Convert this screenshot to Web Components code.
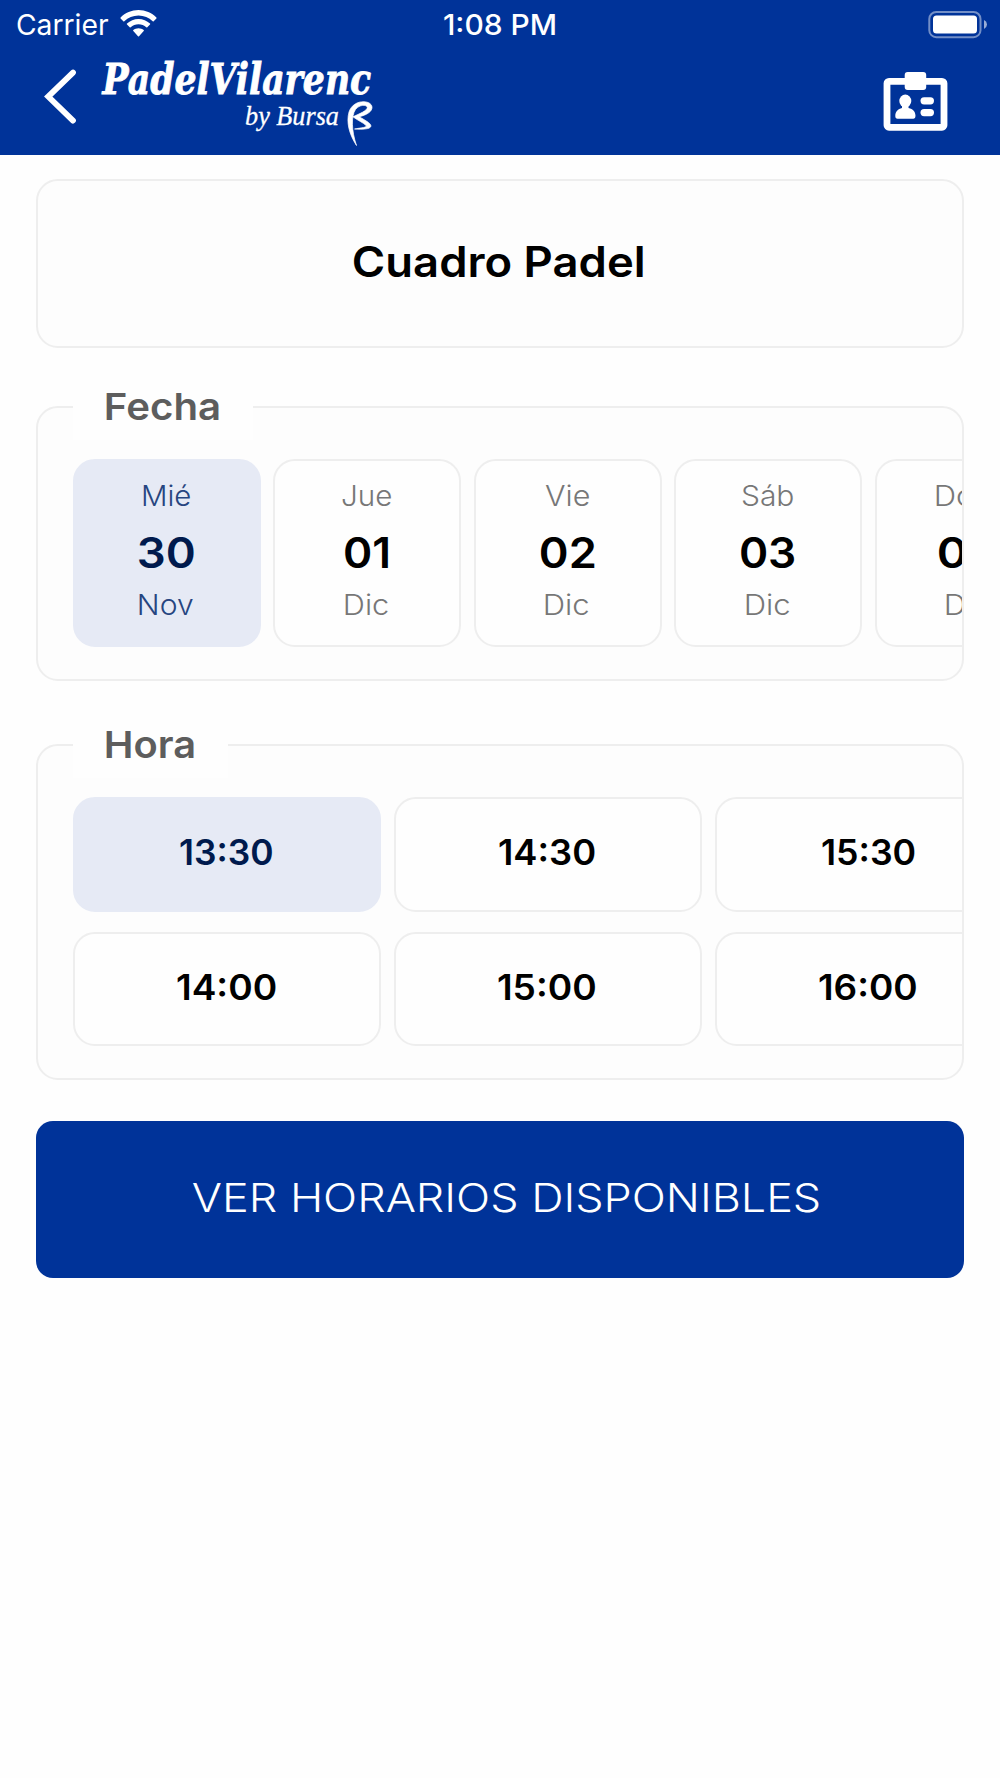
<!DOCTYPE html>
<html lang="es">
<head>
<meta charset="utf-8">
<title>Cuadro Padel</title>
<style>
body { margin: 0; background: #fefefe; font-family: Inter, "Liberation Sans", sans-serif; }
</style>
</head>
<body>
<booking-page></booking-page>
<script>
const define = (name, html, ready) => {
  const template = document.createElement('template');
  template.innerHTML = html;
  customElements.define(name, class extends HTMLElement {
    connectedCallback() {
      if (this.shadowRoot) return;
      this.attachShadow({ mode: 'open' }).append(template.content.cloneNode(true));
      if (ready) ready(this, this.shadowRoot);
    }
  });
};

// A single line of text whose visible ink spans exactly the width given by w.
const pen = document.createElement('canvas').getContext('2d');
define('fit-text', `
  <style>
    :host { display: block; flex: none; height: 1.2em; line-height: 1.2; text-align: left; white-space: nowrap; }
    span { display: inline-block; transform-origin: 0 50%; }
  </style><span></span>`, (host, root) => {
  const span = root.querySelector('span');
  const text = host.getAttribute('text');
  const w = +host.getAttribute('w');
  span.textContent = text;
  const cs = getComputedStyle(host);
  pen.font = cs.fontStyle + ' ' + cs.fontWeight + ' ' + cs.fontSize + ' ' + cs.fontFamily;
  const m = pen.measureText(text);
  const k = w / (m.actualBoundingBoxLeft + m.actualBoundingBoxRight);
  host.style.width = w + 'px';
  span.style.transform = 'translateX(' + m.actualBoundingBoxLeft * k + 'px) scaleX(' + k + ')';
});

define('status-bar', `
  <style>
    :host { display: grid; grid-template-columns: 1fr auto 1fr; align-items: center; height: 51.600px; padding: 0 12px 0 17px; font-size: 28px; color: #fff; }
    .left { display: flex; align-items: center; gap: 10.500px; }
    .time { font-weight: 500; margin-right: 6px; }
    .battery { justify-self: end; margin-top: -1px; }
    svg { display: block; }
    .wifi { margin-top: -5px; }
  </style>
  <div class="left"><fit-text text="Carrier" w="91"></fit-text>
    <svg class="wifi" width="38" height="28" viewBox="119 9 38 28" fill="#fff">
      <path d="M138.500 10C131.600 10 125.200 12.800 120.600 17.500Q120.200 18 120.600 18.500L123.300 21.200Q123.800 21.600 124.300 21.200C128.100 17.500 133 15.400 138.500 15.400S148.900 17.500 152.700 21.200Q153.200 21.600 153.700 21.200L156.400 18.500Q156.800 18 156.400 17.500C151.800 12.800 145.400 10 138.500 10Z"/>
      <path d="M138.500 19C134.100 19 130.100 20.700 127 23.600Q126.500 24.100 127 24.600L129.700 27.300Q130.200 27.700 130.700 27.300C132.800 25.400 135.500 24.300 138.500 24.300S144.200 25.400 146.300 27.300Q146.800 27.700 147.300 27.300L150 24.600Q150.500 24.100 150 23.600C146.900 20.700 142.900 19 138.500 19Z"/>
      <path d="M138.500 28.200C136.500 28.200 134.700 28.900 133.300 30Q132.800 30.500 133.300 31L138 36.200Q138.500 36.700 139 36.200L143.700 31Q144.200 30.500 143.700 30C142.300 28.900 140.500 28.200 138.500 28.200Z"/>
    </svg></div>
  <fit-text class="time" text="1:08 PM" w="111.500"></fit-text>
  <svg class="battery" width="60" height="28" viewBox="928 11 60 28">
    <rect x="929.300" y="12" width="51.200" height="25.200" rx="7" fill="none" stroke="#fff" stroke-opacity=".45" stroke-width="2"/>
    <rect x="933" y="15.600" width="44" height="18" rx="3.500" fill="#fff"/>
    <path d="M984 20Q987 21.500 987 24.400T984 29Z" fill="#fff" fill-opacity=".6"/>
  </svg>`);

define('padel-logo', `
  <style>
    :host { display: block; color: #fff; width: 272px; }
    .name { font: italic 700 43px "DejaVu Serif", serif; line-height: 50px; height: 46px; -webkit-text-stroke: .9px #fff; }
    .by { display: flex; justify-content: flex-end; align-items: flex-start; gap: 9px; }
    .by fit-text { font: italic 400 28px "Liberation Serif", serif; line-height: 32px; height: 32px; -webkit-text-stroke: .3px #fff; }
    svg { display: block; margin-top: 1px; }
  </style>
  <fit-text class="name" text="PadelVilarenc" w="270"></fit-text>
  <div class="by"><fit-text text="by Bursa" w="92"></fit-text>
    <svg width="26" height="46" viewBox="347 101 26 46" fill="#fff">
      <path d="M356.500 145.500C349 134 346.200 122 349 112C351.500 104.500 358 101.500 364 101.700C370.500 102 373.500 106 371.300 110C369.500 113.500 364 115.500 359.500 116.700C364 120 370.500 122.500 371 126C370.500 129.500 362 129.400 354.500 129C359 128 365.500 127.800 366.500 126C363.500 122.500 357.500 120.500 353 116.800C359.500 113.500 367 111 367.300 107.500C366.500 104.300 359.500 104.500 355.500 109.500C351 116 351.500 131 356.500 145.500Z" stroke="#fff" stroke-width=".7" stroke-linejoin="round"/>
    </svg></div>`);

define('app-header', `
  <style>
    :host { display: flex; flex-direction: column; height: 154.700px; background: #003399; }
    nav { display: flex; align-items: flex-start; padding: 0 52px 0 44px; }
    svg { display: block; }
    .back { margin-top: 17.500px; }
    padel-logo { margin: 2px auto 0 24px; }
    .card { margin-top: 19.600px; }
  </style>
  <status-bar></status-bar>
  <nav>
    <svg class="back" width="33" height="56" viewBox="44 69 33 56" fill="none" stroke="#fff" stroke-width="5.800" stroke-linecap="round" stroke-linejoin="miter"><path d="M73 72.600L48.200 96.600L73 120.600"/></svg>
    <padel-logo></padel-logo>
    <svg class="card" width="66" height="62" viewBox="882 71 66 62" fill="#fff">
      <rect x="887" y="81.300" width="57" height="46" rx="2" fill="none" stroke="#fff" stroke-width="6.800"/>
      <rect x="904.700" y="72" width="21.500" height="18" rx="3"/>
      <ellipse cx="905.300" cy="101" rx="6" ry="6.500"/>
      <path d="M902 105H908.500V108C913 109 915.500 111.500 915.500 116Q915.500 118.700 913.500 118.700H897.500Q895.300 118.700 895.300 116C895.300 111.500 898 109 902 108Z"/>
      <rect x="920.500" y="97.200" width="13.500" height="7.200" rx="3.600"/>
      <rect x="920.500" y="109" width="13.500" height="7.200" rx="3.600"/>
    </svg>
  </nav>`);

define('field-group', `
  <style>
    :host { display: block; box-sizing: border-box; border: 2px solid #eeeeee; border-radius: 22px; background: #fdfdfd; }
    .legend { display: flex; align-items: center; justify-content: center; box-sizing: border-box; width: fit-content; height: 68px; margin: -36px 0 19px 34.700px; padding: 2px 35px 0 33px; background: #fefefe; font-size: 37.300px; font-weight: 580; color: #5d5d5d; }
    .scroller { overflow: hidden; padding-left: 34.500px; }
  </style>
  <div class="legend"><slot name="legend"></slot></div>
  <div class="scroller"><slot></slot></div>`);

define('date-chip', `
  <style>
    :host { box-sizing: border-box; flex: none; display: flex; flex-direction: column; align-items: center; width: 188px; height: 188.400px; padding: 15px 1px 0 0; border: 2px solid #eeeeee; border-radius: 22px; background: #fefefe; color: #000; }
    :host([selected]) { background: #e6eaf5; border-color: #e6eaf5; color: #001a4d; }
    .small { font-size: 28px; font-weight: 300; height: 40px; line-height: 40px; color: #777; }
    :host([selected]) .small { color: #264580; }
    .num { font-size: 42px; font-weight: 580; height: 48px; line-height: 48px; margin: 13.500px 0 7.500px; }
  </style>`, (host, root) => {
  const row = (cls, text, w) => {
    const t = document.createElement('fit-text');
    t.className = cls;
    t.setAttribute('text', text);
    t.setAttribute('w', w);
    root.append(t);
  };
  const widths = host.getAttribute('widths').split(' ');
  row('small', host.getAttribute('weekday'), widths[0]);
  row('num', host.getAttribute('day'), widths[1]);
  row('small', host.getAttribute('month'), widths[2]);
});

define('time-chip', `
  <style>
    :host { box-sizing: border-box; display: flex; align-items: center; justify-content: center; height: 114.600px; padding: 0 2px 4px 0; border: 2px solid #eeeeee; border-radius: 22px; background: #fefefe; font-size: 35px; font-weight: 580; color: #000; }
    :host([selected]) { background: #e6eaf5; border-color: #e6eaf5; color: #001a4d; }
  </style><slot></slot>`);

define('booking-page', `
  <style>
    :host { display: block; height: 1778px; overflow: hidden; }
    main { display: flex; flex-direction: column; padding: 24.300px 36.300px 0; }
    .title { box-sizing: border-box; display: flex; align-items: center; justify-content: center; height: 169px; padding: 0 3px 3px 0; border: 2px solid #eeeeee; border-radius: 22px; background: #fdfdfd; font-size: 42px; font-weight: 580; color: #000; }
    .date { height: 275px; margin-top: 58px; }
    .hour { height: 336px; margin-top: 63px; }
    .dates { display: flex; gap: 12.500px; }
    .hours { display: grid; grid-template-rows: repeat(2, 114.600px); grid-auto-flow: column; grid-auto-columns: 308.500px; gap: 20px 12.500px; }
    button { display: flex; align-items: center; justify-content: center; height: 156.700px; margin: 41px 0 0; padding: 0 0 1px 11px; border: 0; border-radius: 17px; background: #003399; color: #fff; font: 300 39.500px Inter, "Liberation Sans", sans-serif; }
  </style>
  <app-header></app-header>
  <main>
    <section class="title"><fit-text text="Cuadro Padel" w="289.500"></fit-text></section>
    <field-group class="date">
      <fit-text slot="legend" text="Fecha" w="112.500"></fit-text>
      <div class="dates">
        <date-chip selected weekday="Mié" day="30" month="Nov" widths="47 55 54"></date-chip>
        <date-chip weekday="Jue" day="01" month="Dic" widths="49 43 43.500"></date-chip>
        <date-chip weekday="Vie" day="02" month="Dic" widths="44 53.500 44"></date-chip>
        <date-chip weekday="Sáb" day="03" month="Dic" widths="51.500 53.500 44"></date-chip>
        <date-chip weekday="Dom" day="04" month="Dic" widths="64 58 44"></date-chip>
      </div>
    </field-group>
    <field-group class="hour">
      <fit-text slot="legend" text="Hora" w="87.500"></fit-text>
      <div class="hours">
        <time-chip selected><fit-text text="13:30" w="92.500"></fit-text></time-chip>
        <time-chip><fit-text text="14:00" w="99"></fit-text></time-chip>
        <time-chip><fit-text text="14:30" w="96"></fit-text></time-chip>
        <time-chip><fit-text text="15:00" w="97.500"></fit-text></time-chip>
        <time-chip><fit-text text="15:30" w="93"></fit-text></time-chip>
        <time-chip><fit-text text="16:00" w="97.500"></fit-text></time-chip>
      </div>
    </field-group>
    <button><fit-text text="VER HORARIOS DISPONIBLES" w="626"></fit-text></button>
  </main>`);
</script>
</body>
</html>
